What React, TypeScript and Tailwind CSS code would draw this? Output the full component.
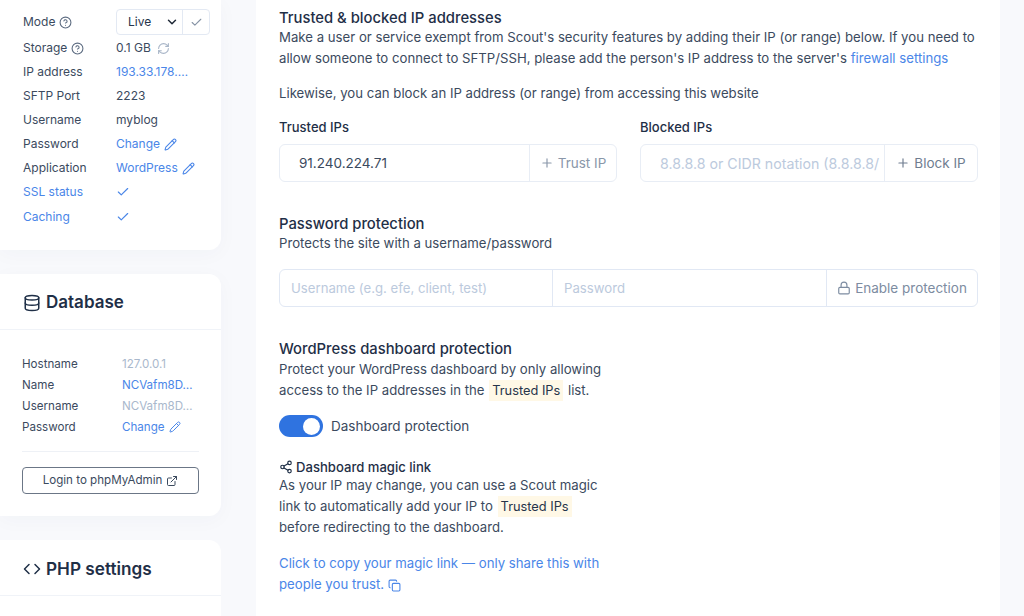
import { Check, ChevronDown, CircleHelp, Code, Copy, Database, ExternalLink, Lock, Pencil, Plus, RefreshCw, Share2 } from "lucide-react";

function InfoRow({ label, height, labelBlue, children }: { label: React.ReactNode; height: string; labelBlue?: boolean; children: React.ReactNode }) {
  return (
    <div className={`flex items-center ${height}`}>
      <div className={`w-[93px] shrink-0 flex items-center gap-1 ${labelBlue ? "text-[#4a86e8]" : "text-[#3b4a5e]"}`}>{label}</div>
      <div className="flex items-center min-w-0 text-[#3b4a5e]">{children}</div>
    </div>
  );
}

function DbRow({ label, children }: { label: string; children: React.ReactNode }) {
  return (
    <div className="flex items-center h-[21px]">
      <div className="w-[100px] shrink-0 text-[#3b4a5e]">{label}</div>
      <div className="flex items-center min-w-0">{children}</div>
    </div>
  );
}

function Mark({ children }: { children: React.ReactNode }) {
  return <span className="bg-[#fff8e6] text-[#26344a] text-[12.8px] px-[3px] py-[3px] mx-[1px]">{children}</span>;
}

export default function App() {
  return (
    <div className="h-[616px] w-[1024px] overflow-hidden bg-[#f8f9fc] flex font-['Inter',sans-serif] text-[12px]">
      <aside className="w-[221px] shrink-0 flex flex-col gap-6">
        <section className="bg-white rounded-br-xl h-[250px] pl-[23px] pr-[11px] pt-[9px] shadow-[0_4px_20px_rgba(30,50,90,0.03)]">
          <InfoRow height="h-[26px]" label={<>Mode <CircleHelp size={13} className="text-[#5c6b80]" /></>}>
            <div className="w-[94px] h-[26px] border border-[#e3e9f3] rounded flex items-center">
              <div className="w-[66px] h-full flex items-center justify-between pl-[11px] pr-[3px] text-[#26344a] border-r border-[#e3e9f3]">
                Live <ChevronDown size={14} strokeWidth={2.5} className="text-[#1f2937]" />
              </div>
              <div className="flex-1 flex justify-center"><Check size={13} className="text-[#8794a6]" /></div>
            </div>
          </InfoRow>
          <div className="mt-[1px]">
            <InfoRow height="h-[24px]" label={<>Storage <CircleHelp size={13} className="text-[#5c6b80]" /></>}>
              0.1 GB <RefreshCw size={13} className="ml-[6px] text-[#a9b6c8]" />
            </InfoRow>
            <InfoRow height="h-[24px]" label="IP address">
              <span className="text-[#4a86e8]">193.33.178.…</span>
            </InfoRow>
            <InfoRow height="h-[24px]" label="SFTP Port">2223</InfoRow>
            <InfoRow height="h-[24px]" label="Username">myblog</InfoRow>
            <InfoRow height="h-[24px]" label="Password">
              <span className="text-[#4a86e8] flex items-center gap-1">Change <Pencil size={13} /></span>
            </InfoRow>
            <InfoRow height="h-[24px]" label="Application">
              <span className="text-[#4a86e8] flex items-center gap-1">WordPress <Pencil size={13} /></span>
            </InfoRow>
            <InfoRow height="h-[24px]" labelBlue label="SSL status"><Check size={14} className="text-[#4a86e8]" /></InfoRow>
            <InfoRow height="h-[25px]" labelBlue label="Caching"><Check size={14} className="text-[#4a86e8]" /></InfoRow>
          </div>
        </section>

        <section className="bg-white rounded-xl rounded-l-none h-[242px] shadow-[0_4px_20px_rgba(30,50,90,0.03)]">
          <div className="h-[56px] border-b border-[#f0f3f8] pl-[23px] pt-[2px] flex items-center gap-[5px] text-[#1f2f47]">
            <Database size={18} />
            <h2 className="text-[17px] font-semibold">Database</h2>
          </div>
          <div className="px-[22px] pt-[24px] text-[11.6px]">
            <DbRow label="Hostname"><span className="text-[#a9b8cc]">127.0.0.1</span></DbRow>
            <DbRow label="Name"><span className="text-[#4a86e8]">NCVafm8D…</span></DbRow>
            <DbRow label="Username"><span className="text-[#a9b8cc]">NCVafm8D…</span></DbRow>
            <DbRow label="Password"><span className="text-[#4a86e8] flex items-center gap-1">Change <Pencil size={12} /></span></DbRow>
            <div className="mt-[13px] border-t border-[#eef1f6]" />
            <button className="mt-[15px] w-full h-[27px] border border-[#6b7686] rounded text-[#3b4a5e] flex items-center justify-center gap-1">
              Login to phpMyAdmin <ExternalLink size={12} />
            </button>
          </div>
        </section>

        <section className="bg-white rounded-tr-xl flex-1">
          <div className="h-[56px] border-b border-[#f0f3f8] pl-[23px] pt-[2px] flex items-center gap-[5px] text-[#1f2f47]">
            <Code size={18} />
            <h2 className="text-[17.2px] font-semibold">PHP settings</h2>
          </div>
        </section>
      </aside>

      <main className="ml-[35px] w-[744px] shrink-0 bg-white pl-[23px] pr-[22px] pt-[8px] text-[#3b4a5e] text-[13.2px] leading-[21px]">
        <h3 className="text-[14.8px] font-medium text-[#1f2f47] leading-[20px]">Trusted &amp; blocked IP addresses</h3>
        <p className="mt-[-1px]">
          Make a user or service exempt from Scout's security features by adding their IP (or range) below. If you need to allow someone to connect to SFTP/SSH, please add the person's IP address to the server's <span className="text-[#4a86e8]">firewall settings</span>
        </p>
        <p className="mt-[14px]">Likewise, you can block an IP address (or range) from accessing this website</p>

        <div className="mt-[13px] grid grid-cols-[338px_338px] gap-x-[23px]">
          <div>
            <div className="font-medium text-[13px] text-[#1f2f47]">Trusted IPs</div>
            <div className="mt-[6px] h-[38px] border border-[#e8edf5] rounded-md flex text-[13.5px]">
              <div className="flex-1 flex items-center pl-[19px] text-[#3b4a5e] border-r border-[#e8edf5]">91.240.224.71</div>
              <div className="w-[86px] flex items-center justify-center gap-1 text-[#8a97a9]"><Plus size={14} /> Trust IP</div>
            </div>
          </div>
          <div>
            <div className="font-medium text-[13px] text-[#1f2f47]">Blocked IPs</div>
            <div className="mt-[6px] h-[38px] border border-[#e8edf5] rounded-md flex text-[13.5px]">
              <div className="flex-1 min-w-0 flex items-center pl-[19px] text-[14.2px] text-[#bccadd] border-r border-[#e8edf5] overflow-hidden whitespace-nowrap">8.8.8.8 or CIDR notation (8.8.8.8/</div>
              <div className="w-[92px] shrink-0 flex items-center justify-center gap-1 text-[#6f7d90]"><Plus size={14} /> Block IP</div>
            </div>
          </div>
        </div>

        <h3 className="mt-[32px] text-[14.8px] font-medium text-[#1f2f47] leading-[20px]">Password protection</h3>
        <p className="mt-[-1px]">Protects the site with a username/password</p>
        <div className="mt-[15px] h-[38px] w-[699px] border border-[#e1e8f4] rounded-md flex text-[#bccadd]">
          <div className="w-[273px] flex items-center pl-[11px] border-r border-[#e1e8f4]">Username (e.g. efe, client, test)</div>
          <div className="w-[274px] flex items-center pl-[11px] border-r border-[#e1e8f4]">Password</div>
          <div className="flex-1 flex items-center justify-center gap-1 text-[13.5px] text-[#7d8ca1]"><Lock size={14} /> Enable protection</div>
        </div>

        <h3 className="mt-[32px] text-[14.8px] font-medium text-[#1f2f47] leading-[20px]">WordPress dashboard protection</h3>
        <p className="w-[340px]">Protect your WordPress dashboard by only allowing access to the IP addresses in the <Mark>Trusted IPs</Mark> list.</p>

        <div className="mt-[14px] flex items-center gap-2">
          <div className="w-[44px] h-[22px] bg-[#2f73e0] rounded-full flex items-center justify-end pr-[3px]">
            <div className="w-[17px] h-[17px] bg-white rounded-full" />
          </div>
          <span className="text-[13.5px]">Dashboard protection</span>
        </div>

        <div className="mt-[20px] w-[330px]">
          <div className="flex items-center gap-[3px] text-[13.1px] font-medium text-[#1f2f47] leading-[20px]"><Share2 size={14} /> Dashboard magic link</div>
          <p className="mt-[-2px]">As your IP may change, you can use a Scout magic link to automatically add your IP to <Mark>Trusted IPs</Mark> before redirecting to the dashboard.</p>
          <p className="mt-[15px] text-[#4a86e8]">Click to copy your magic link — only share this with people you trust. <Copy size={13} className="inline-block" /></p>
        </div>
      </main>
    </div>
  );
}
